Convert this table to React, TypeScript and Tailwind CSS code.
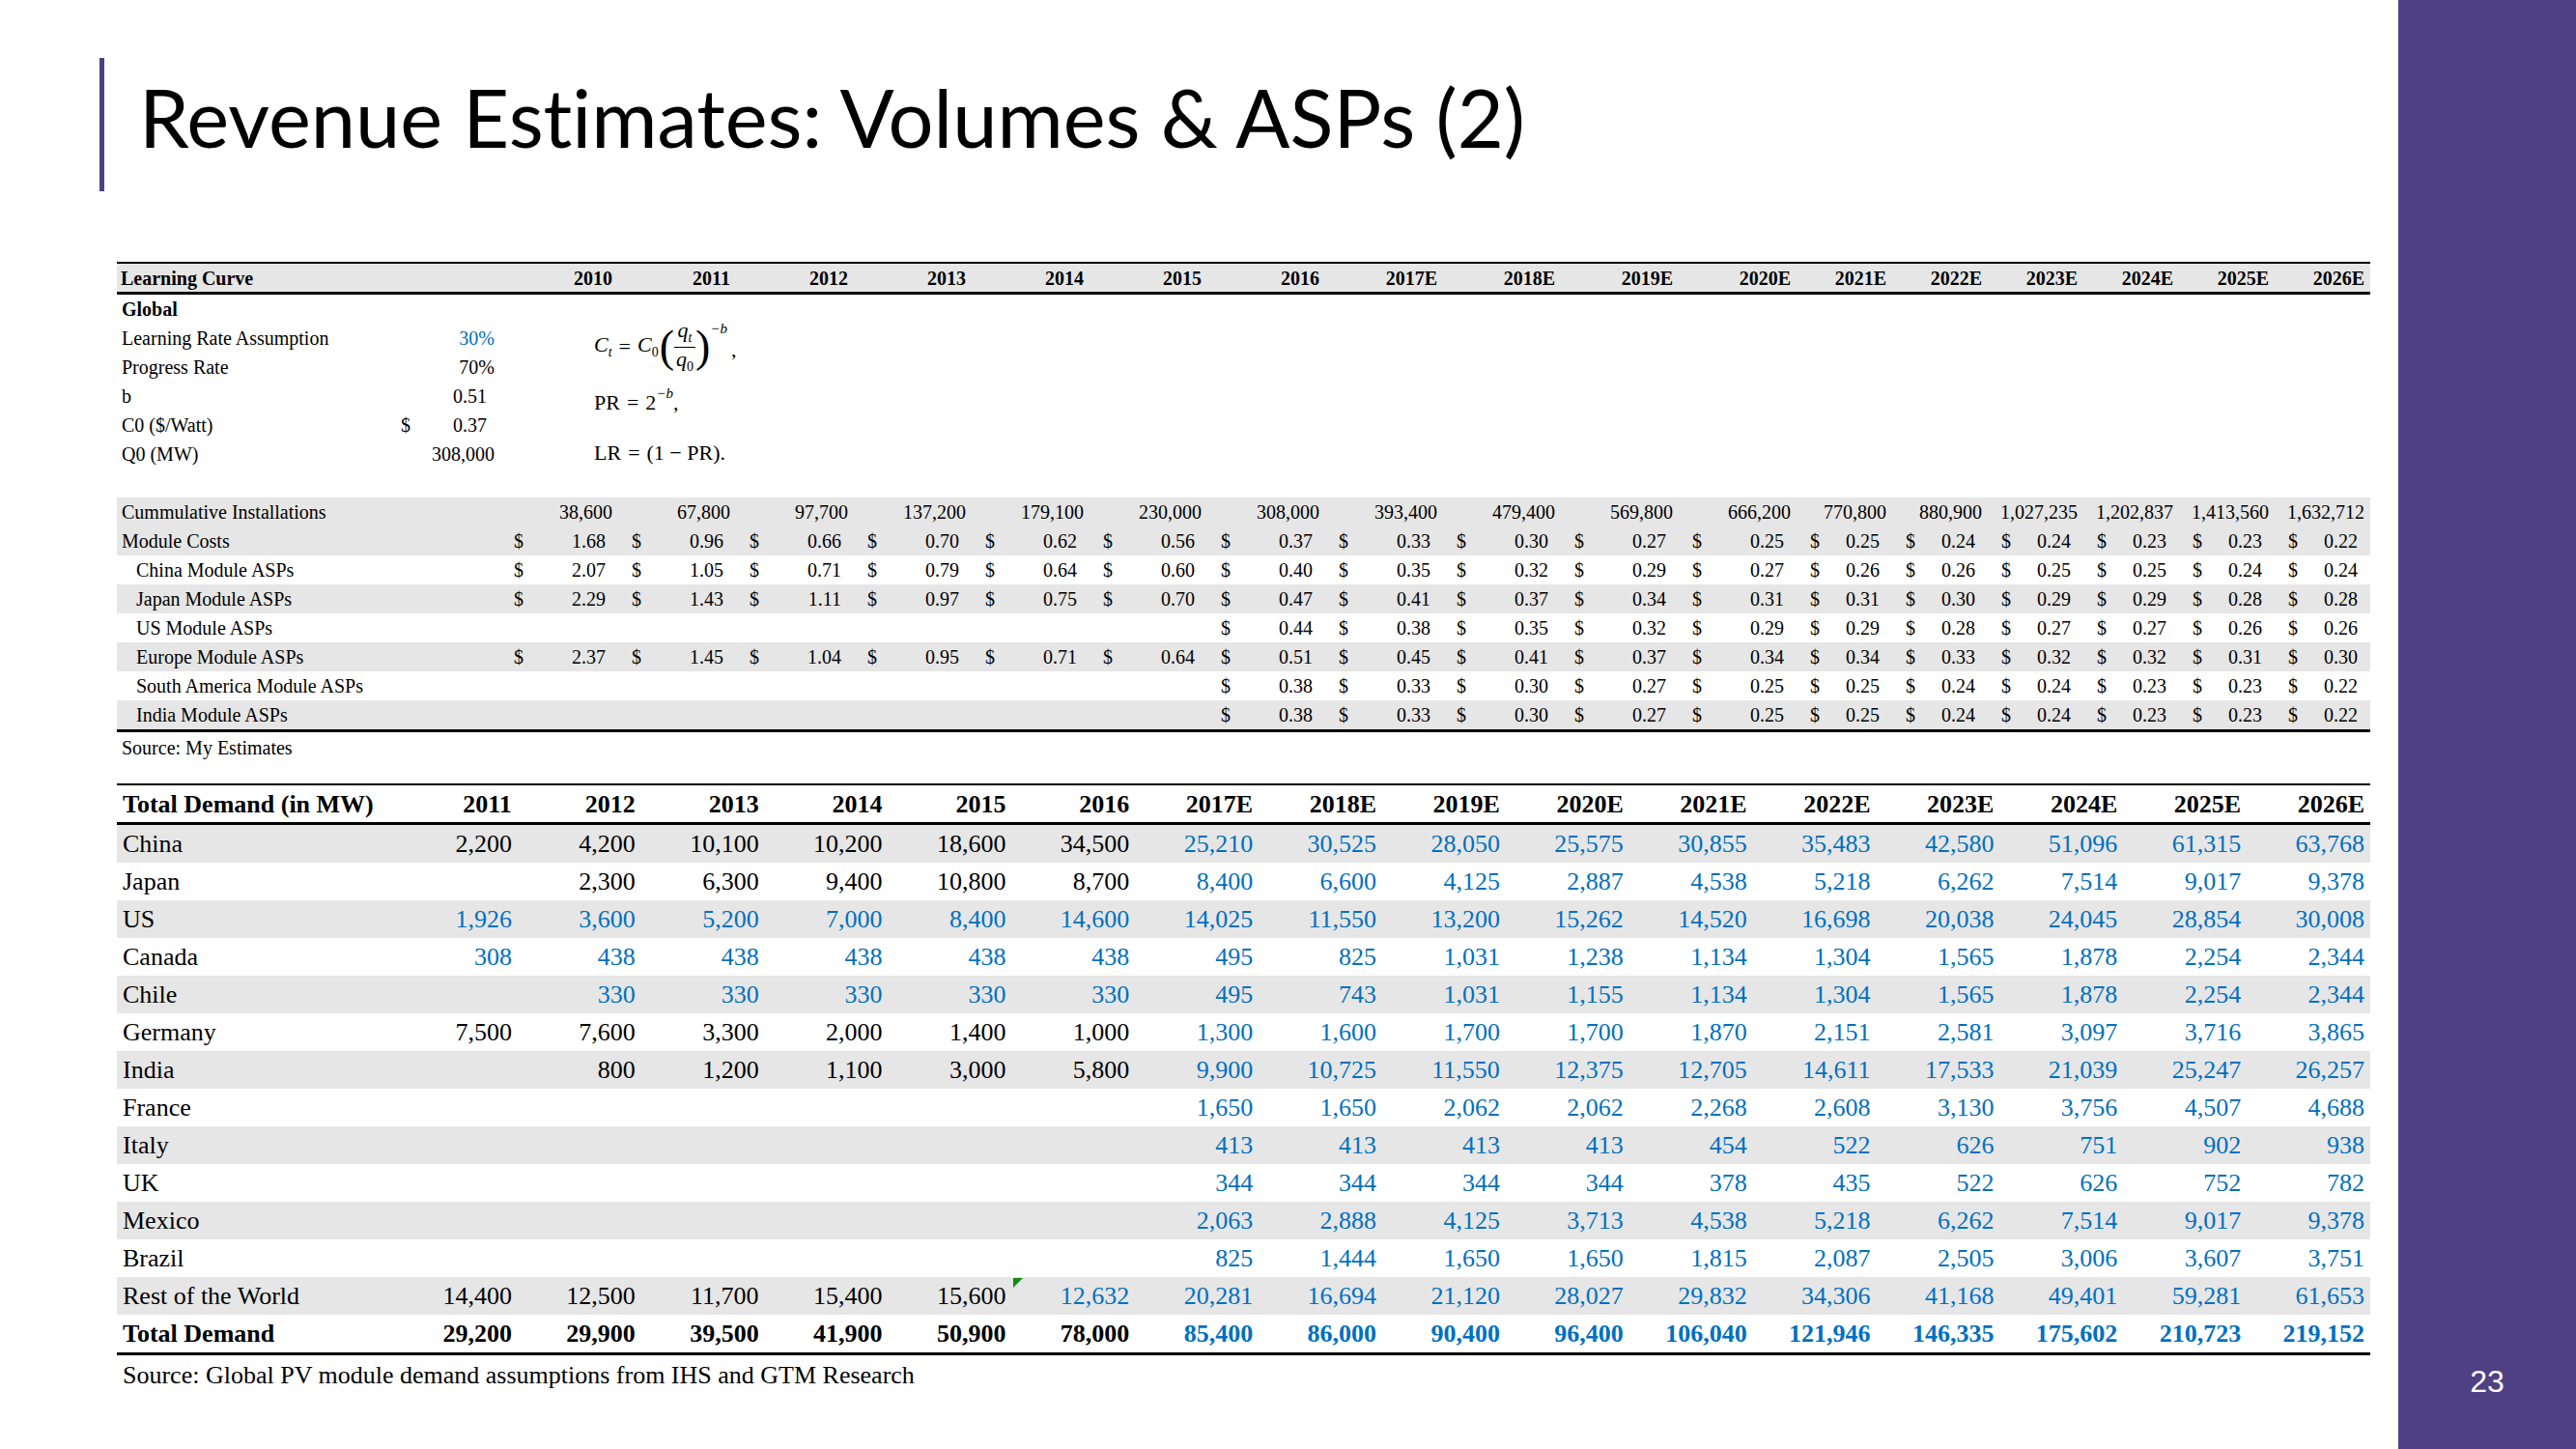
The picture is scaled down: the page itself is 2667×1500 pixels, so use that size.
import React from "react";

const serif = "font-['Liberation_Serif','Times_New_Roman',serif]";
const BLUE = "text-[#0070c0]";

const upperYears = [
  "2010", "2011", "2012", "2013", "2014", "2015", "2016", "2017E", "2018E", "2019E", "2020E",
  "2021E", "2022E", "2023E", "2024E", "2025E", "2026E",
];

const uw = (i: number) => (i < 11 ? "w-[122px]" : "w-[99px]");

type URow = { label: string; indent: boolean; gray: boolean; dollar: boolean; values: string[] };

const blank6 = ["", "", "", "", "", ""];

const upperRows: URow[] = [
  {
    label: "Cummulative Installations", indent: false, gray: true, dollar: false,
    values: ["38,600", "67,800", "97,700", "137,200", "179,100", "230,000", "308,000", "393,400", "479,400", "569,800", "666,200", "770,800", "880,900", "1,027,235", "1,202,837", "1,413,560", "1,632,712"],
  },
  {
    label: "Module Costs", indent: false, gray: true, dollar: true,
    values: ["1.68", "0.96", "0.66", "0.70", "0.62", "0.56", "0.37", "0.33", "0.30", "0.27", "0.25", "0.25", "0.24", "0.24", "0.23", "0.23", "0.22"],
  },
  {
    label: "China Module ASPs", indent: true, gray: false, dollar: true,
    values: ["2.07", "1.05", "0.71", "0.79", "0.64", "0.60", "0.40", "0.35", "0.32", "0.29", "0.27", "0.26", "0.26", "0.25", "0.25", "0.24", "0.24"],
  },
  {
    label: "Japan Module ASPs", indent: true, gray: true, dollar: true,
    values: ["2.29", "1.43", "1.11", "0.97", "0.75", "0.70", "0.47", "0.41", "0.37", "0.34", "0.31", "0.31", "0.30", "0.29", "0.29", "0.28", "0.28"],
  },
  {
    label: "US Module ASPs", indent: true, gray: false, dollar: true,
    values: [...blank6, "0.44", "0.38", "0.35", "0.32", "0.29", "0.29", "0.28", "0.27", "0.27", "0.26", "0.26"],
  },
  {
    label: "Europe Module ASPs", indent: true, gray: true, dollar: true,
    values: ["2.37", "1.45", "1.04", "0.95", "0.71", "0.64", "0.51", "0.45", "0.41", "0.37", "0.34", "0.34", "0.33", "0.32", "0.32", "0.31", "0.30"],
  },
  {
    label: "South America Module ASPs", indent: true, gray: false, dollar: true,
    values: [...blank6, "0.38", "0.33", "0.30", "0.27", "0.25", "0.25", "0.24", "0.24", "0.23", "0.23", "0.22"],
  },
  {
    label: "India Module ASPs", indent: true, gray: true, dollar: true,
    values: [...blank6, "0.38", "0.33", "0.30", "0.27", "0.25", "0.25", "0.24", "0.24", "0.23", "0.23", "0.22"],
  },
];

const lowerYears = [
  "2011", "2012", "2013", "2014", "2015", "2016", "2017E", "2018E", "2019E", "2020E",
  "2021E", "2022E", "2023E", "2024E", "2025E", "2026E",
];

type LRow = { label: string; values: string[]; blueFrom: number; bold?: boolean };

const lowerRows: LRow[] = [
  { label: "China", blueFrom: 6, values: ["2,200", "4,200", "10,100", "10,200", "18,600", "34,500", "25,210", "30,525", "28,050", "25,575", "30,855", "35,483", "42,580", "51,096", "61,315", "63,768"] },
  { label: "Japan", blueFrom: 6, values: ["", "2,300", "6,300", "9,400", "10,800", "8,700", "8,400", "6,600", "4,125", "2,887", "4,538", "5,218", "6,262", "7,514", "9,017", "9,378"] },
  { label: "US", blueFrom: 0, values: ["1,926", "3,600", "5,200", "7,000", "8,400", "14,600", "14,025", "11,550", "13,200", "15,262", "14,520", "16,698", "20,038", "24,045", "28,854", "30,008"] },
  { label: "Canada", blueFrom: 0, values: ["308", "438", "438", "438", "438", "438", "495", "825", "1,031", "1,238", "1,134", "1,304", "1,565", "1,878", "2,254", "2,344"] },
  { label: "Chile", blueFrom: 0, values: ["", "330", "330", "330", "330", "330", "495", "743", "1,031", "1,155", "1,134", "1,304", "1,565", "1,878", "2,254", "2,344"] },
  { label: "Germany", blueFrom: 6, values: ["7,500", "7,600", "3,300", "2,000", "1,400", "1,000", "1,300", "1,600", "1,700", "1,700", "1,870", "2,151", "2,581", "3,097", "3,716", "3,865"] },
  { label: "India", blueFrom: 6, values: ["", "800", "1,200", "1,100", "3,000", "5,800", "9,900", "10,725", "11,550", "12,375", "12,705", "14,611", "17,533", "21,039", "25,247", "26,257"] },
  { label: "France", blueFrom: 6, values: [...blank6, "1,650", "1,650", "2,062", "2,062", "2,268", "2,608", "3,130", "3,756", "4,507", "4,688"] },
  { label: "Italy", blueFrom: 6, values: [...blank6, "413", "413", "413", "413", "454", "522", "626", "751", "902", "938"] },
  { label: "UK", blueFrom: 6, values: [...blank6, "344", "344", "344", "344", "378", "435", "522", "626", "752", "782"] },
  { label: "Mexico", blueFrom: 6, values: [...blank6, "2,063", "2,888", "4,125", "3,713", "4,538", "5,218", "6,262", "7,514", "9,017", "9,378"] },
  { label: "Brazil", blueFrom: 6, values: [...blank6, "825", "1,444", "1,650", "1,650", "1,815", "2,087", "2,505", "3,006", "3,607", "3,751"] },
  { label: "Rest of the World", blueFrom: 5, values: ["14,400", "12,500", "11,700", "15,400", "15,600", "12,632", "20,281", "16,694", "21,120", "28,027", "29,832", "34,306", "41,168", "49,401", "59,281", "61,653"] },
  { label: "Total Demand", blueFrom: 6, bold: true, values: ["29,200", "29,900", "39,500", "41,900", "50,900", "78,000", "85,400", "86,000", "90,400", "96,400", "106,040", "121,946", "146,335", "175,602", "210,723", "219,152"] },
];

function GlobalRow({
  label,
  bold,
  children,
}: {
  label: string;
  bold?: boolean;
  children?: React.ReactNode;
}) {
  return (
    <div className="flex h-[30px] items-center">
      <div className={`w-[275px] shrink-0 pl-[5px] ${bold ? "font-bold" : ""}`}>{label}</div>
      <div className="w-[122px] shrink-0 h-full flex items-center">{children}</div>
    </div>
  );
}

function Formulas() {
  return (
    <div className="absolute left-[494px] top-[60px] flex flex-col text-[22px] text-black leading-none">
      <div className="flex h-[56px] items-center">
        <span className="italic">
          C<span className="align-sub text-[14px]">t</span>
        </span>
        <span className="mx-[7px]">=</span>
        <span className="italic">
          C<span className="align-sub text-[14px] not-italic">0</span>
        </span>
        <span className="text-[46px] font-light ml-[1px] leading-none">(</span>
        <span className="flex flex-col items-center">
          <span className="italic pb-[1px]">
            q<span className="align-sub text-[14px]">t</span>
          </span>
          <span className="h-[1px] w-[22px] bg-black"></span>
          <span className="italic pt-[1px]">
            q<span className="align-sub text-[14px] not-italic">0</span>
          </span>
        </span>
        <span className="text-[46px] font-light leading-none">)</span>
        <span className="self-start text-[15px] italic mt-[2px]">−b</span>
        <span className="ml-[4px] mt-[6px]">,</span>
      </div>
      <div className="flex items-end mt-[19px]">
        <span>PR</span>
        <span className="mx-[7px]">=</span>
        <span>2</span>
        <span className="text-[15px] italic self-start -mt-[6px]">−b</span>
        <span>,</span>
      </div>
      <div className="flex items-end mt-[30px]">
        <span>LR</span>
        <span className="mx-[7px]">=</span>
        <span>(1 − PR).</span>
      </div>
    </div>
  );
}

export default function App() {
  return (
    <div className={`flex w-[2667px] h-[1500px] bg-white overflow-hidden text-black`}>
      <div className="w-[2483px] shrink-0 flex flex-col">
        {/* Title */}
        <div className="h-[271px] flex items-start shrink-0">
          <div className="ml-[103px] mt-[60px] w-[5px] h-[138px] bg-[#4f4083]"></div>
          <h1 className="ml-[36px] mt-[80px] text-[83px] leading-none font-['Lato',sans-serif] font-normal text-black [font-variant-ligatures:none]">
            Revenue Estimates: Volumes &amp; ASPs (2)
          </h1>
        </div>

        {/* Upper table */}
        <div className={`ml-[121px] w-[2333px] relative ${serif} text-[20px]`}>
          <div className="flex h-[34px] items-center border-t-[2px] border-b-[3px] border-black bg-[#e6e6e6] font-bold">
            <div className="w-[275px] shrink-0 pl-[4px]">Learning Curve</div>
            <div className="w-[122px] shrink-0"></div>
            {upperYears.map((y, i) => (
              <div key={y} className={`${uw(i)} shrink-0 text-right pr-[6px]`}>
                {y}
              </div>
            ))}
          </div>

          <GlobalRow label="Global" bold />
          <GlobalRow label="Learning Rate Assumption">
            <span className={`w-full text-right pr-[6px] ${BLUE}`}>30%</span>
          </GlobalRow>
          <GlobalRow label="Progress Rate">
            <span className="w-full text-right pr-[6px]">70%</span>
          </GlobalRow>
          <GlobalRow label="b">
            <span className="w-full text-right pr-[14px]">0.51</span>
          </GlobalRow>
          <GlobalRow label="C0 ($/Watt)">
            <span className="w-full flex justify-between pl-[19px] pr-[14px]">
              <span>$</span>
              <span>0.37</span>
            </span>
          </GlobalRow>
          <GlobalRow label="Q0 (MW)">
            <span className="w-full text-right pr-[6px]">308,000</span>
          </GlobalRow>
          <div className="h-[30px]"></div>

          {upperRows.map((r) => (
            <div key={r.label} className={`flex h-[30px] items-center ${r.gray ? "bg-[#e6e6e6]" : ""}`}>
              <div className={`w-[275px] shrink-0 ${r.indent ? "pl-[20px]" : "pl-[5px]"}`}>{r.label}</div>
              <div className="w-[122px] shrink-0"></div>
              {r.values.map((v, i) =>
                r.dollar ? (
                  <div key={i} className={`${uw(i)} shrink-0 flex justify-between pl-[14px] pr-[13px]`}>
                    <span>{v ? "$" : ""}</span>
                    <span>{v}</span>
                  </div>
                ) : (
                  <div key={i} className={`${uw(i)} shrink-0 text-right pr-[6px]`}>
                    {v}
                  </div>
                )
              )}
            </div>
          ))}
          <div className="h-[3px] bg-black"></div>
          <div className="h-[32px] flex items-center pl-[5px]">Source: My Estimates</div>

          <Formulas />
        </div>

        {/* Lower table */}
        <div className={`mt-[21px] ml-[121px] w-[2333px] ${serif} text-[26px]`}>
          <div className="flex h-[43px] items-center border-t-[2px] border-b-[3px] border-black font-bold">
            <div className="w-[287px] shrink-0 pl-[6px]">Total Demand (in MW)</div>
            {lowerYears.map((y) => (
              <div key={y} className="w-[127.875px] shrink-0 text-right pr-[6px]">
                {y}
              </div>
            ))}
          </div>
          {lowerRows.map((r, ri) => (
            <div
              key={r.label}
              className={`flex h-[39px] items-center ${ri % 2 === 0 ? "bg-[#e6e6e6]" : ""} ${r.bold ? "font-bold" : ""}`}
            >
              <div className="w-[287px] shrink-0 pl-[6px]">{r.label}</div>
              {r.values.map((v, i) => (
                <div
                  key={i}
                  className={`relative w-[127.875px] h-full flex items-center justify-end shrink-0 pr-[6px] ${i >= r.blueFrom ? BLUE : ""}`}
                >
                  {r.label === "Rest of the World" && i === 5 ? (
                    <span className="absolute left-[2px] top-[1px] w-0 h-0 border-t-[10px] border-t-[#138a13] border-r-[10px] border-r-transparent"></span>
                  ) : null}
                  {v}
                </div>
              ))}
            </div>
          ))}
          <div className="h-[3px] bg-black"></div>
          <div className="h-[40px] flex items-center pl-[6px]">
            Source: Global PV module demand assumptions from IHS and GTM Research
          </div>
        </div>
      </div>

      {/* Purple side panel */}
      <div className="w-[184px] shrink-0 bg-[#4f4083] flex items-end justify-center pb-[54px]">
        <span className="text-[32px] leading-none text-white font-['Liberation_Sans',Arial,sans-serif]">23</span>
      </div>
    </div>
  );
}
